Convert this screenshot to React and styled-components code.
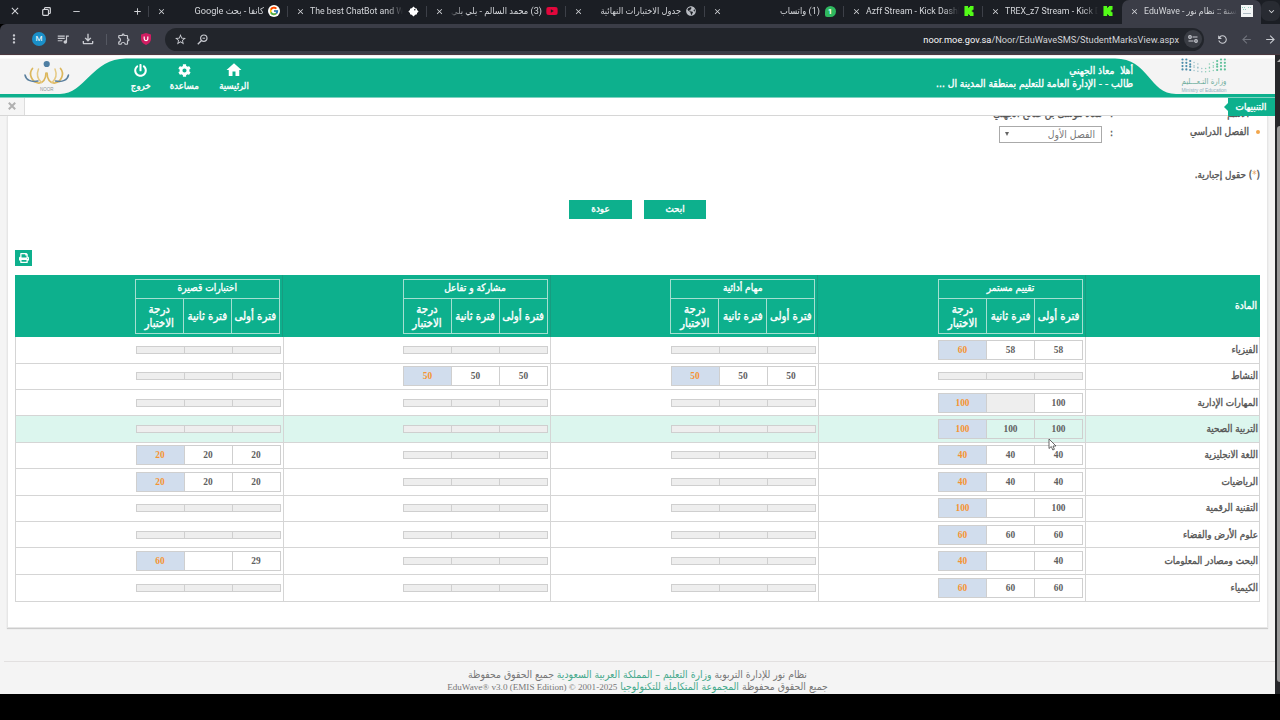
import React from 'react';
import styled, { createGlobalStyle, css } from 'styled-components';
import { FaCog, FaPowerOff, FaPrint, FaYoutube, FaGlobeAmericas } from 'react-icons/fa';
import { FcGoogle } from 'react-icons/fc';
import {
  MdHome,
  MdOutlineFileDownload,
  MdQueueMusic,
  MdOutlineExtension,
  MdStarBorder,
  MdMoreVert,
  MdRefresh,
  MdArrowBack,
  MdArrowForward,
  MdClose,
  MdAdd,
  MdRemove,
  MdKeyboardArrowDown
} from 'react-icons/md';

const green = '#0db08d';
const arabic = '"DejaVu Sans Condensed", "DejaVu Sans", sans-serif';
const ui = 'Roboto, "DejaVu Sans Condensed", "DejaVu Sans", sans-serif';

// the bold cut is too wide for the small labels, so they are thickened instead
const heavy = css`
  font-weight: 400;
  -webkit-text-stroke: 0.35px currentColor;
`;

const tabs = [
  { title: 'كانفا - بحث Google', icon: 'google', rtl: true },
  { title: 'The best ChatBot and Widgets', icon: 'bot' },
  { title: '(3) محمد السالم - يلي بلي', icon: 'youtube', rtl: true },
  { title: 'جدول الاختبارات النهائية', icon: 'globe', rtl: true },
  { title: '(1) واتساب', icon: 'whatsapp', rtl: true },
  { title: 'Azff Stream - Kick Dashboard', icon: 'kick' },
  { title: 'TREX_z7 Stream - Kick Dashboard', icon: 'kick' },
  { title: 'EduWave - حسنة :: نظام نور', icon: 'noor', active: true }
];

const groups = ['تقييم مستمر', 'مهام أدائية', 'مشاركة و تفاعل', 'اختبارات قصيرة'];

// each group holds [first period, second period, exam mark]; null is a group without marks
const subjects = [
  { name: 'الفيزياء', marks: [['58', '58', '60'], null, null, null] },
  { name: 'النشاط', marks: [null, ['50', '50', '50'], ['50', '50', '50'], null] },
  { name: 'المهارات الإدارية', marks: [['100', null, '100'], null, null, null] },
  { name: 'التربية الصحية', marks: [['100', '100', '100'], null, null, null], hover: true },
  { name: 'اللغة الانجليزية', marks: [['40', '40', '40'], null, null, ['20', '20', '20']] },
  { name: 'الرياضيات', marks: [['40', '40', '40'], null, null, ['20', '20', '20']] },
  { name: 'التقنية الرقمية', marks: [['100', '', '100'], null, null, null] },
  { name: 'علوم الأرض والفضاء', marks: [['60', '60', '60'], null, null, null] },
  { name: 'البحث ومصادر المعلومات', marks: [['40', '', '40'], null, null, ['29', '', '60']] },
  { name: 'الكيمياء', marks: [['60', '60', '60'], null, null, null] }
];

const KickIcon = () => (
  <svg width="10" height="10" viewBox="0 0 10 11">
    <path fill="#53fc18" d="M0 0h4v2h1V1h1V0h4v4H9v1H8v1h1v1h1v4H6v-1H5V9H4v2H0z" />
  </svg>
);

const TabIcon = ({ type }) => {
  switch (type) {
    case 'google':
      return (
        <GoogleBadge>
          <FcGoogle size={10} />
        </GoogleBadge>
      );
    case 'bot':
      return (
        <svg width="11" height="11" viewBox="0 0 11 11">
          <path fill="#fff" d="M5.5 0.6 10.6 5.5 5.5 10.4 0.4 5.5z" />
          <path fill="#fff" d="M2 2.6h7v5.8H2z" />
          <circle cx="6.8" cy="3.8" r="0.8" fill="#1c1e24" />
        </svg>
      );
    case 'youtube':
      return <FaYoutube size={12} color="#e3073c" />;
    case 'globe':
      return <FaGlobeAmericas size={10} color="#b9bcc2" />;
    case 'whatsapp':
      return <WhatsappBadge>1</WhatsappBadge>;
    case 'kick':
      return <KickIcon />;
    default:
      return (
        <svg width="12" height="12" viewBox="0 0 12 12">
          <path fill="#f4f6f6" d="M0 0h12v12H0z" />
          <path stroke="#8fcdbb" strokeDasharray="1 1" d="M1 2.5h4M7 2.5h4M2 4.5h3" />
          <path stroke="#aebbc4" d="M2 8.5h8" />
        </svg>
      );
  }
};

const NoorLogo = () => (
  <svg width="46" height="33" viewBox="0 0 46 33">
    <circle cx="22.700" cy="4" r="3.100" fill="#4f7fa3" />
    <g fill="none" strokeLinecap="round">
      <path stroke="#dcb75c" strokeWidth="1.700" d="M8.500 8.500C4 14 8 22 14 23c5 .500 8-4 8-10" />
      <path stroke="#dcb75c" strokeWidth="1.700" d="M36.500 8.500C41 14 37 22 31 23c-5 .500-8-4-8-10" />
      <path stroke="#e5c983" strokeWidth="1.500" d="M14.500 9c-2 5-1 10 3 13.500" />
      <path stroke="#e5c983" strokeWidth="1.500" d="M31 9c2 5 1 10-3 13.500" />
      <path stroke="#5a7f9d" strokeWidth="1.500" d="M1 15c1 5 6 7.500 13 6" />
      <path stroke="#5a7f9d" strokeWidth="1.500" d="M44.500 15c-1 5-6 7.500-13 6" />
    </g>
    <text x="22.700" y="30.500" fontSize="4.500" textAnchor="middle" fill="#8c9499" fontFamily="Liberation Sans">
      NOOR
    </text>
  </svg>
);

const MinistryLogo = () => {
  const dots = [];
  for (let c = 0; c < 12; c++) {
    const edge = Math.abs(c - 5.5);
    const shift = edge > 4 ? 0 : (4.5 - edge) * 1.5;
    for (let r = 0; r < 4; r++) {
      if (edge > 1 || r > 1) {
        dots.push(
          <circle
            key={`${c}-${r}`}
            cx={1.5 + c * 3.85}
            cy={1.5 + r * 3.3 + (r < 2 ? shift : shift * 0.4)}
            r={edge > 3 ? 1.1 : 0.75}
            fill={c < 3 ? '#3f86a5' : c < 6 ? '#6fa9b4' : '#55bd95'}
            opacity={edge > 3 ? 0.95 : 0.65}
          />
        );
      }
    }
  }
  return (
    <svg width="46" height="36" viewBox="0 0 46 36">
      {dots}
      <text x="23" y="26" fontSize="8" textAnchor="middle" textLength="45" lengthAdjust="spacingAndGlyphs" fill="#6fae9d" fontFamily="DejaVu Sans">
        وزارة التـعـــليم
      </text>
      <text x="23" y="33.500" fontSize="5" textAnchor="middle" textLength="45" lengthAdjust="spacingAndGlyphs" fill="#8fb0bd" fontFamily="Liberation Sans">
        Ministry of Education
      </text>
    </svg>
  );
};

const MarkBoxes = ({ marks, hover }) => {
  if (!marks) {
    return (
      <Boxes $flat>
        <Box $none />
        <Box $none />
        <Box $none />
      </Boxes>
    );
  }
  return (
    <Boxes>
      {marks.map((mark, i) => (
        <Box key={i} $none={mark === null} $exam={i === 2} $hover={hover}>
          {mark}
        </Box>
      ))}
    </Boxes>
  );
};

const App = () => (
  <Screen>
    <GlobalStyle />
    <TabStrip>
      <WindowControls>
        <MdClose size={12} />
        <svg width="9" height="9" viewBox="0 0 9 9" fill="none" stroke="currentColor" strokeWidth="1.200">
          <rect x="0.700" y="2.500" width="5.800" height="5.800" rx="1" />
          <path d="M2.500 2.500v-1q0-.800.800-.800h4.200q.800 0 .800.800v4.200q0 .800-.800.800h-1" />
        </svg>
        <MdRemove size={11} />
      </WindowControls>
      <NewTab>
        <MdAdd size={11} />
      </NewTab>
      {tabs.map((tab, i) => (
        <Tab key={i} $active={tab.active} $divider={i < 7}>
          <MdClose size={9} />
          <TabTitle dir={tab.rtl ? 'rtl' : 'ltr'}>{tab.title}</TabTitle>
          <TabIconSlot>
            <TabIcon type={tab.icon} />
          </TabIconSlot>
        </Tab>
      ))}
      <TabSearch>
        <MdKeyboardArrowDown size={11} />
      </TabSearch>
    </TabStrip>

    <Toolbar>
      <Tools>
        <MdMoreVert size={14} />
        <Avatar>M</Avatar>
        <MdQueueMusic size={14} />
        <MdOutlineFileDownload size={16} />
        <ToolDivider />
        <MdOutlineExtension size={14} />
        <Shield>
          <svg width="10" height="12" viewBox="0 0 10 12">
            <path fill="#d11d62" d="M5 0 10 1.500V6c0 3-2.500 5-5 6-2.500-1-5-3-5-6V1.500z" />
            <path fill="none" stroke="#fff" strokeWidth="1.200" d="M3.200 3.500v2.300a1.800 1.800 0 0 0 3.600 0V3.500" />
          </svg>
        </Shield>
      </Tools>
      <Omnibox>
        <MdStarBorder size={13} />
        <svg width="11" height="11" viewBox="0 0 11 11" fill="none" stroke="currentColor">
          <circle cx="6.800" cy="4.200" r="3.200" strokeWidth="1.200" />
          <path strokeWidth="1.300" d="M4.500 6.500.8 10.200" />
          <path d="M5.500 4.200h2.600" />
        </svg>
        <Url>
          <b>noor.moe.gov.sa</b>/Noor/EduWaveSMS/StudentMarksView.aspx
        </Url>
        <SiteInfo>
          <svg width="10" height="8" viewBox="0 0 10 8" fill="none" stroke="currentColor" strokeWidth="1.200">
            <circle cx="2" cy="2" r="1.300" />
            <path d="M4.500 2h5M.500 6h5" />
            <circle cx="8" cy="6" r="1.300" />
          </svg>
        </SiteInfo>
      </Omnibox>
      <Nav>
        <FlipIcon>
          <MdRefresh size={13} />
        </FlipIcon>
        <DimIcon>
          <MdArrowBack size={13} />
        </DimIcon>
        <MdArrowForward size={13} />
      </Nav>
    </Toolbar>

    <Viewport>
      <Page>
        <Header>
          <HeaderShape width="1275" height="42" viewBox="0 0 1275 42">
            <path fill="#fff" d="M0 0h1275v2.500H0z" />
            <path
              fill={green}
              d="M0 38H60C85 38 92 2.500 126 2.500H1115C1149 2.500 1149 38 1176 38H1275V41.500H0z"
            />
          </HeaderShape>
          <LogoSlot>
            <NoorLogo />
          </LogoSlot>
          <Menu>
            <MenuItem>
              <FaPowerOff size={13} />
              خروج
            </MenuItem>
            <MenuItem>
              <FaCog size={13} />
              مساعدة
            </MenuItem>
            <MenuItem>
              <MdHome size={18} />
              الرئيسية
            </MenuItem>
          </Menu>
          <Welcome dir="rtl">
            <div>أهلا&nbsp; معاذ الجهني</div>
            <div>طالب - - الإدارة العامة للتعليم بمنطقة المدينة ال ...</div>
          </Welcome>
          <MinistrySlot>
            <MinistryLogo />
          </MinistrySlot>
        </Header>

        <Notice>
          <NoticeClose>
            <svg width="8" height="8" viewBox="0 0 8 8" stroke="currentColor" strokeWidth="2">
              <path d="M.8.8l6.400 6.400M7.200.8.8 7.200" />
            </svg>
          </NoticeClose>
          <NoticeTag>التنبيهات</NoticeTag>
        </Notice>

        <Panel dir="rtl">
          <ClippedRow>
            <ClippedLabel>الاسم</ClippedLabel>
            <Colon>:</Colon>
            <ClippedName>معاذ موسى بن صالح الجهني</ClippedName>
          </ClippedRow>
          <Field>
            <Label>
              <Bullet />
              الفصل الدراسي
            </Label>
            <Colon>:</Colon>
            <Select>
              <span>الفصل الأول</span>
              <Caret />
            </Select>
          </Field>
          <Required>
            (<Star>*</Star>) حقول إجبارية.
          </Required>
          <Actions>
            <Button $width={62}>ابحث</Button>
            <Button $width={63}>عودة</Button>
          </Actions>
          <PrintRow>
            <PrintButton>
              <FaPrint size={10} />
            </PrintButton>
          </PrintRow>

          <Table>
            <TableHead>
              <SubjectCell $head>المادة</SubjectCell>
              {groups.map(group => (
                <GroupCell key={group} $head>
                  <HeadBox>
                    <HeadTitle>{group}</HeadTitle>
                    <HeadSub>فترة أولى</HeadSub>
                    <HeadSub>فترة ثانية</HeadSub>
                    <HeadSub>
                      درجة
                      <br />
                      الاختبار
                    </HeadSub>
                  </HeadBox>
                </GroupCell>
              ))}
            </TableHead>
            {subjects.map(subject => (
              <TableRow key={subject.name} $hover={subject.hover}>
                <SubjectCell>{subject.name}</SubjectCell>
                {subject.marks.map((marks, i) => (
                  <GroupCell key={i}>
                    <MarkBoxes marks={marks} hover={subject.hover} />
                  </GroupCell>
                ))}
              </TableRow>
            ))}
          </Table>
        </Panel>

        <Footer dir="rtl">
          <FooterLine>
            نظام نور للإدارة التربوية <em>وزارة التعليم – المملكة العربية السعودية</em> جميع الحقوق محفوظة
          </FooterLine>
          <FooterLine>
            جميع الحقوق محفوظة <em>المجموعة المتكاملة للتكنولوجيا</em>{' '}
            <Latin dir="ltr">EduWave® v3.0 (EMIS Edition) © 2001-2025</Latin>
          </FooterLine>
        </Footer>
      </Page>
      <Scrollbar>
        <ScrollUp />
        <Thumb />
      </Scrollbar>
    </Viewport>

    <Cursor width="9" height="13" viewBox="0 0 9 13">
      <path fill="#fff" stroke="#444" strokeWidth="0.800" d="M1 1v9.500l2.300-2 1.500 3.500 1.600-.700L5 8h3z" />
    </Cursor>
  </Screen>
);

const GlobalStyle = createGlobalStyle`
  * { box-sizing: border-box; }
  body { margin: 0; background: #000; overflow: hidden; }
`;

const Screen = styled.div`
  position: relative;
  width: 1280px;
  height: 720px;
  background: #000;
  font-family: ${arabic};
  overflow: hidden;
`;

const TabStrip = styled.div`
  display: flex;
  height: 24px;
  background: #1b1e24;
  color: #d5d7db;
  font-family: ${ui};
`;

const WindowControls = styled.div`
  width: 90px;
  display: flex;
  align-items: center;
  justify-content: space-between;
  padding: 0 8px 2px 9px;
`;

const NewTab = styled.div`
  width: 59px;
  display: flex;
  align-items: center;
  justify-content: flex-end;
  padding: 0 6px 2px 0;
`;

const Tab = styled.div`
  width: 139px;
  display: flex;
  align-items: center;
  padding: 0 8px 2px 8px;
  border-radius: 7px 7px 0 0;
  background: ${({ $active }) => ($active ? '#3b3d47' : 'transparent')};
  svg {
    flex: none;
  }
  &::before {
    content: '';
    width: 1px;
    height: 11px;
    margin: 0 0 0 -9px;
    background: ${({ $divider }) => ($divider ? '#3d4048' : 'transparent')};
  }
  > svg {
    margin-left: 8px;
  }
`;

const TabTitle = styled.div`
  flex: 1;
  margin: 0 4px 0 5px;
  overflow: hidden;
  white-space: nowrap;
  font-size: ${({ dir }) => (dir === 'rtl' ? '9.2px' : '8.75px')};
  line-height: 14px;
  mask-image: linear-gradient(
    ${({ dir }) => (dir === 'rtl' ? 'to left' : 'to right')},
    #000 84%,
    transparent
  );
`;

const TabIconSlot = styled.div`
  width: 12px;
  height: 12px;
  display: flex;
  align-items: center;
  justify-content: center;
`;

const GoogleBadge = styled.div`
  width: 12px;
  height: 12px;
  border-radius: 50%;
  display: flex;
  align-items: center;
  justify-content: center;
  background: #fff;
`;

const WhatsappBadge = styled.div`
  width: 11px;
  height: 11px;
  border-radius: 50% 50% 50% 2px;
  background: #2fb85f;
  color: #fff;
  font-size: 8px;
  font-weight: 700;
  line-height: 11px;
  text-align: center;
`;

const TabSearch = styled.div`
  width: 19px;
  height: 20px;
  margin-top: 1px;
  border-radius: 7px;
  background: #282b32;
  display: flex;
  align-items: center;
  padding-left: 5px;
`;

const Toolbar = styled.div`
  display: flex;
  align-items: center;
  height: 31px;
  background: #3b3d47;
  border-bottom: 1px solid #4b3940;
  border-radius: 6px 0 0 0;
  color: #c9cbd1;
  font-family: ${ui};
`;

const Tools = styled.div`
  width: 165px;
  display: flex;
  align-items: center;
  padding-left: 7px;
  gap: 10px;
`;

const Avatar = styled.div`
  width: 14px;
  height: 14px;
  border-radius: 50%;
  background: #1a8fc8;
  color: #fff;
  font-size: 8px;
  line-height: 14px;
  text-align: center;
  margin: 0 0 0 1px;
`;

const ToolDivider = styled.div`
  width: 1px;
  height: 11px;
  background: #555862;
`;

const Shield = styled.div`
  display: flex;
`;

const Omnibox = styled.div`
  width: 1039px;
  height: 23px;
  display: flex;
  align-items: center;
  gap: 10px;
  padding: 0 2px 0 9px;
  border-radius: 12px;
  background: #22252b;
`;

const Url = styled.div`
  flex: 1;
  margin-right: -5px;
  text-align: right;
  font-size: 9.25px;
  color: #d2d4d8;
  b {
    font-weight: 400;
    color: #f8f8f9;
  }
`;

const SiteInfo = styled.div`
  width: 18px;
  height: 18px;
  display: flex;
  align-items: center;
  justify-content: center;
  border-radius: 50%;
  background: #3a3d44;
`;

const Nav = styled.div`
  display: flex;
  align-items: center;
  gap: 11px;
  padding-left: 12px;
`;

const FlipIcon = styled.span`
  display: flex;
  transform: scaleX(-1);
`;

const DimIcon = styled.span`
  display: flex;
  color: #70737c;
`;

const Viewport = styled.div`
  display: flex;
  height: 639px;
`;

const Page = styled.div`
  width: 1275px;
  background: #f4f4f4;
  overflow: hidden;
`;

const Header = styled.header`
  position: relative;
  display: flex;
  height: 42px;
  color: #fff;
  margin-top: 1px;
`;

const HeaderShape = styled.svg`
  position: absolute;
  inset: 0;
`;

const LogoSlot = styled.div`
  position: relative;
  width: 119px;
  padding: 4px 0 0 24px;
`;

const Menu = styled.nav`
  position: relative;
  display: flex;
`;

const MenuItem = styled.div`
  width: 43.5px;
  display: flex;
  flex-direction: column;
  align-items: center;
  font-size: 9.6px;
  ${heavy}
  line-height: 13px;
  white-space: nowrap;
  padding-top: 7px;
  svg {
    height: 15px;
    margin-bottom: 1px;
    stroke-width: 0;
  }
  &:last-child {
    width: 56px;
  }
  &:last-child svg {
    height: 18px;
    margin: -2px 0 0;
  }
`;

const Welcome = styled.div`
  position: relative;
  flex: 1;
  padding: 8px 0 0;
  font-size: 10.2px;
  ${heavy}
  line-height: 13px;
`;

const MinistrySlot = styled.div`
  position: relative;
  width: 142px;
  padding: 2px 0 0 48px;
`;

const Notice = styled.div`
  display: flex;
  justify-content: space-between;
  height: 18px;
  background: #fff;
  border-bottom: 1px solid #d6d6d6;
`;

const NoticeClose = styled.div`
  width: 25px;
  display: flex;
  align-items: center;
  justify-content: center;
  padding-bottom: 2px;
  background: #f5f5f5;
  border-right: 1px solid #ddd;
  color: #b0b0b0;
`;

const NoticeTag = styled.div`
  width: 51px;
  height: 18px;
  padding-left: 3px;
  background: ${green};
  color: #fff;
  font-size: 9.8px;
  ${heavy}
  line-height: 17px;
  text-align: center;
  clip-path: polygon(4px 0, 100% 0, 100% 100%, 4px 100%, 4px 13px, 0 9px, 4px 5px);
`;

const Panel = styled.main`
  height: 512px;
  margin: 0 7px;
  padding: 0 7px;
  background: #fff;
  border: 1px solid #e6e6e6;
  border-width: 0 1px 1px;
  box-shadow: 0 1px 1px #ccc;
  color: #555;
`;

const ClippedRow = styled.div`
  display: flex;
  align-items: flex-end;
  height: 4px;
  overflow: hidden;
  font-size: 10.3px;
  ${heavy}
  line-height: 14px;
`;

const ClippedLabel = styled.div`
  width: 147px;
  padding-right: 11px;
`;

const ClippedName = styled.div`
  padding-right: 6px;
`;

const Field = styled.div`
  display: flex;
  height: 30px;
  padding-top: 6px;
  font-size: 10px;
  ${heavy}
`;

const Label = styled.div`
  width: 147px;
  display: flex;
  gap: 7px;
  line-height: 12px;
`;

const Bullet = styled.i`
  width: 4px;
  height: 4px;
  margin: 4px 0 0;
  border-radius: 50%;
  background: #f2a64b;
`;

const Colon = styled.div`
  width: 5px;
  line-height: 14px;
`;

const Select = styled.div`
  width: 103px;
  height: 17px;
  margin-right: 6px;
  display: flex;
  align-items: center;
  justify-content: space-between;
  padding: 0 6px 2px 5px;
  border: 1px solid #aaa;
  font-size: 10.3px;
  -webkit-text-stroke: 0;
  color: #777;
`;

const Caret = styled.i`
  border: 2.5px solid transparent;
  border-top: 4px solid #666;
  border-bottom: 0;
`;

const Required = styled.div`
  height: 50px;
  padding-top: 18px;
  font-size: 9.8px;
  ${heavy}
  line-height: 14px;
`;

const Star = styled.span`
  color: #e8a45a;
  -webkit-text-stroke: 0;
`;

const Actions = styled.div`
  display: flex;
  justify-content: center;
  gap: 12px;
`;

const Button = styled.button`
  width: ${({ $width }) => $width}px;
  height: 19px;
  padding: 0 0 2px;
  border: 0;
  background: ${green};
  color: #fff;
  font-family: ${arabic};
  font-size: 9.8px;
  ${heavy}
`;

const PrintRow = styled.div`
  display: flex;
  justify-content: flex-end;
  height: 56px;
  padding-top: 31px;
`;

const PrintButton = styled.div`
  width: 17px;
  height: 16px;
  display: flex;
  align-items: center;
  justify-content: center;
  background: ${green};
  color: #fff;
`;

const Table = styled.div`
  border: 1px solid #d5d5d5;
  border-top: 0;
`;

const TableHead = styled.div`
  display: grid;
  grid-template-columns: 174px repeat(4, 1fr);
  height: 62.2px;
  margin: 0 -1px;
  background: ${green};
  color: #fff;
`;

const TableRow = styled.div`
  display: grid;
  grid-template-columns: 173px repeat(4, 1fr);
  height: 26.4px;
  border-bottom: 1px solid #d5d5d5;
  background: ${({ $hover }) => ($hover ? '#dcf6ee' : '#fff')};
  &:last-child {
    border-bottom: 0;
  }
`;

const SubjectCell = styled.div`
  display: flex;
  align-items: center;
  padding: 0 ${({ $head }) => ($head ? '3px 2px' : '1px 1px')} 0;
  font-size: ${({ $head }) => ($head ? '10px' : '9.9px')};
  ${heavy}
`;

const GroupCell = styled.div`
  display: flex;
  align-items: center;
  padding-right: 2px;
  border-right: 1px solid ${({ $head }) => ($head ? '#189c80' : '#d5d5d5')};
`;

const HeadBox = styled.div`
  display: grid;
  grid-template-columns: repeat(3, 48px);
  grid-template-rows: 19px 35px;
  width: 145px;
  border: solid #a5dfd1;
  border-width: 1px 1px 0 0;
  ${heavy}
`;

const HeadTitle = styled.div`
  grid-column: 1 / -1;
  border: solid #a5dfd1;
  border-width: 0 0 1px 1px;
  font-size: 10.1px;
  line-height: 16px;
  text-align: center;
`;

const HeadSub = styled.div`
  display: flex;
  align-items: center;
  justify-content: center;
  border: solid #a5dfd1;
  border-width: 0 0 1px 1px;
  font-size: 11.4px;
  line-height: 14px;
  text-align: center;
  white-space: nowrap;
`;

const Boxes = styled.div`
  display: grid;
  grid-template-columns: repeat(3, 48px);
  width: 145px;
  height: ${({ $flat }) => ($flat ? '8px' : '20px')};
  border: solid #cfcfcf;
  border-width: 1px 1px 1px 0;
`;

const Box = styled.div`
  display: flex;
  align-items: center;
  justify-content: center;
  border-left: 1px solid #cfcfcf;
  background: ${({ $none, $exam, $hover }) =>
    $none ? '#eee' : $exam ? '#d1dded' : $hover ? '#dcf6ee' : '#fff'};
  color: ${({ $exam }) => ($exam ? '#f59432' : '#606060')};
  font-family: 'Liberation Serif', serif;
  font-size: 9.4px;
  font-weight: 700;
`;

const Footer = styled.footer`
  margin: 33px 0 0 4px;
  padding: 6px 4px 0 0;
  border-top: 1px solid #e2e0e0;
  color: #777;
`;

const FooterLine = styled.div`
  font-size: 10.35px;
  line-height: 12px;
  text-align: center;
  white-space: nowrap;
  em {
    font-style: normal;
    color: #45a98c;
  }
`;

const Latin = styled.span`
  font-family: 'Liberation Serif', serif;
  font-size: 9.1px;
`;

const Scrollbar = styled.div`
  width: 5px;
  background: #26272a;
  padding-left: 2px;
`;

const ScrollUp = styled.div`
  height: 7px;
  border: solid transparent;
  border-width: 0 0 4px 4px;
  border-bottom-color: #b5b5b5;
`;

const Thumb = styled.div`
  height: 556px;
  margin-top: 64px;
  border-radius: 3px 0 0 3px;
  background: #9a9a9a;
`;

const Cursor = styled.svg`
  position: absolute;
  left: 1048px;
  top: 438px;
`;

export default App;
